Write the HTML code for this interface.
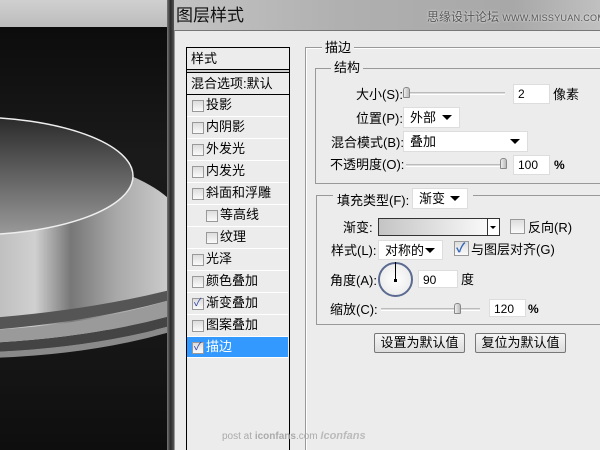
<!DOCTYPE html>
<html style="width:600px;height:450px;overflow:hidden"><head><meta charset="utf-8"><style>
*{margin:0;padding:0;box-sizing:border-box}
body{width:600px;height:450px;overflow:hidden;position:relative;background:#111;font-family:"Liberation Sans","Noto Sans CJK SC",sans-serif;font-size:12px;color:#000}
.a{position:absolute}
.t{position:absolute;white-space:nowrap;line-height:14px}
.cb{position:absolute;width:12px;height:12px;border:1px solid #999;background:linear-gradient(#ddd,#fafafa)}
.ck{position:absolute;left:1px;top:-3px;color:#34a;font-size:11px;line-height:14px}
.item{position:absolute;left:187px;width:101px;height:22px;border-bottom:1px solid #fff}
.item .cb{left:5px;top:5px}
.item .lb{position:absolute;left:19px;top:2px;font-size:13px;line-height:16px}
.inp{position:absolute;background:#fff;border:1px solid #ddd;font-size:12px;padding-left:4px;line-height:18px}
.dd{position:absolute;background:#fff;border:1px solid #ddd;font-size:13px;padding-left:6px;line-height:19px}
.dd:after{content:"";position:absolute;right:7px;top:7px;border-left:5px solid transparent;border-right:5px solid transparent;border-top:5px solid #000}
.sl{position:absolute;height:3px;border-top:1px solid #bbb;border-bottom:1px solid #fff;background:#ddd}
.th{position:absolute;width:7px;height:11px;background:linear-gradient(90deg,#eee,#bbb);border:1px solid #888;border-radius:3px 3px 1px 1px}
.btn{position:absolute;height:20px;border:1px solid #777;border-radius:2px;background:linear-gradient(#f6f6f6,#ddd);font-size:13px;text-align:center;line-height:18px}
</style></head><body>
<div class="a" style="left:0;top:0;width:167px;height:27px;background:linear-gradient(#d0d0d0,#bcbcbc)"></div>
<div class="a" style="left:0;top:27px;width:167px;height:423px;background:linear-gradient(#0c0c0c,#1a1a1a 30%,#151515 80%,#0e0e0e)"></div>
<svg class="a" style="left:0;top:0" width="167" height="450">
<defs>
<linearGradient id="body" x1="0" x2="1"><stop offset="0" stop-color="#bbb"/><stop offset=".25" stop-color="#d0d0d0"/><stop offset=".45" stop-color="#777"/><stop offset=".7" stop-color="#a8a8a8"/><stop offset="1" stop-color="#ccc"/></linearGradient>
<linearGradient id="top" x1="0" y1="0" x2="0" y2="1"><stop offset="0" stop-color="#2a2a2a"/><stop offset="1" stop-color="#9a9a9a"/></linearGradient>
</defs>
<path d="M-10 330 L-10 150 C60 150 140 170 170 200 L170 330 Z" fill="url(#body)"/>
<path d="M-10 318 Q90 310 170 290 L170 300 Q90 322 -10 330 Z" fill="#555"/>
<path d="M-10 330 Q90 325 170 300 L170 316 Q90 338 -10 343 Z" fill="#9a9a9a"/>
<path d="M-10 343 Q90 338 170 316 L170 326 Q90 348 -10 352 Z" fill="#444"/>
<path d="M-10 352 Q90 348 170 326 L170 332 Q90 355 -10 358 Z" fill="#8a8a8a"/>
<ellipse cx="-30" cy="176" rx="163" ry="59" fill="url(#top)" stroke="#eee" stroke-width="1.5"/>
</svg>
<div class="a" style="left:167px;top:0;width:433px;height:31px;background:linear-gradient(90deg,#c4c4c4,#b0b0b0 40%,#a8a8a8 80%,#c0c0c0)"></div>
<div class="t" style="left:176px;top:7px;font-size:17px;line-height:18px;color:#111">图层样式</div>
<div class="t" style="left:427px;top:10px;font-size:12px;color:#555;text-shadow:0 0 2px #fff">思缘设计论坛 <span style="font-size:9px;letter-spacing:.3px">WWW.MISSYUAN.COM</span></div>
<div class="a" style="left:167px;top:0;width:7px;height:450px;background:linear-gradient(90deg,#777,#2a2a2a,#555)"></div>
<div class="a" style="left:174px;top:30px;width:426px;height:420px;background:#ececec;border-top:1px solid #777;border-left:1px solid #999"></div>
<div class="a" style="left:186px;top:47px;width:104px;height:403px;border:1px solid #000;border-bottom:none;background:#ececec"></div>
<div class="t" style="left:191px;top:52px;font-size:13px">样式</div>
<div class="a" style="left:187px;top:69px;width:102px;height:4px;border-top:1px solid #000;border-bottom:1px solid #000;background:#ccc"></div>
<div class="t" style="left:191px;top:77px;font-size:13px">混合选项:默认</div>
<div class="a" style="left:187px;top:94px;width:102px;height:1px;background:#000"></div>
<div class="item" style="top:95px"><div class="cb"></div><span class="lb">投影</span></div>
<div class="item" style="top:117px"><div class="cb"></div><span class="lb">内阴影</span></div>
<div class="item" style="top:139px"><div class="cb"></div><span class="lb">外发光</span></div>
<div class="item" style="top:161px"><div class="cb"></div><span class="lb">内发光</span></div>
<div class="item" style="top:183px"><div class="cb"></div><span class="lb">斜面和浮雕</span></div>
<div class="item" style="top:205px"><div class="cb" style="left:19px"></div><span class="lb" style="left:33px">等高线</span></div>
<div class="item" style="top:227px"><div class="cb" style="left:19px"></div><span class="lb" style="left:33px">纹理</span></div>
<div class="item" style="top:249px"><div class="cb"></div><span class="lb">光泽</span></div>
<div class="item" style="top:271px"><div class="cb"></div><span class="lb">颜色叠加</span></div>
<div class="item" style="top:293px"><div class="cb"><span class="ck">✓</span></div><span class="lb">渐变叠加</span></div>
<div class="item" style="top:315px"><div class="cb"></div><span class="lb">图案叠加</span></div>
<div class="item" style="top:337px;background:#3399ff;height:21px"><div class="cb"><span class="ck">✓</span></div><span class="lb" style="color:#fff">描边</span></div>
<div class="a" style="left:305px;top:47px;width:295px;height:403px;border:1px solid #999;border-right:none;border-bottom:none;box-shadow:inset 1px 1px #fff"></div>
<div class="t" style="left:322px;top:41px;font-size:13px;background:#ececec;padding:0 3px">描边</div>
<div class="a" style="left:315px;top:68px;width:285px;height:116px;border:1px solid #999;border-right:none"></div>
<div class="t" style="left:331px;top:61px;font-size:13px;background:#ececec;padding:0 3px">结构</div>
<div class="a" style="left:316px;top:195px;width:284px;height:130px;border:1px solid #999;border-right:none"></div>
<div class="a" style="left:333px;top:190px;width:140px;height:20px;background:#ececec"></div>
<div class="t" style="left:356px;top:88px;font-size:13px">大小(S):</div>
<div class="sl" style="left:405px;top:92px;width:100px"></div><div class="th" style="left:403px;top:87px"></div>
<div class="inp" style="left:513px;top:84px;width:37px;height:20px">2</div>
<div class="t" style="left:553px;top:88px;font-size:13px">像素</div>
<div class="t" style="left:356px;top:112px;font-size:13px">位置(P):</div>
<div class="dd" style="left:403px;top:107px;width:57px;height:21px">外部</div>
<div class="t" style="left:331px;top:136px;font-size:13px">混合模式(B):</div>
<div class="dd" style="left:403px;top:131px;width:125px;height:21px">叠加</div>
<div class="t" style="left:330px;top:158px;font-size:13px">不透明度(O):</div>
<div class="sl" style="left:406px;top:164px;width:100px"></div><div class="th" style="left:500px;top:158px"></div>
<div class="inp" style="left:513px;top:155px;width:37px;height:20px">100</div>
<div class="t" style="left:554px;top:158px;font-weight:bold">%</div>
<div class="t" style="left:337px;top:194px;font-size:13px">填充类型(F):</div>
<div class="dd" style="left:412px;top:188px;width:56px;height:21px">渐变</div>
<div class="t" style="left:343px;top:221px;font-size:13px">渐变:</div>
<div class="a" style="left:378px;top:218px;width:122px;height:18px;border:1px solid #333;background:linear-gradient(90deg,#c4c4c4,#fff)"></div>
<div class="a" style="left:487px;top:219px;width:12px;height:16px;background:#fff;border-left:1px solid #333"></div>
<div class="a" style="left:490px;top:226px;border-left:3px solid transparent;border-right:3px solid transparent;border-top:3px solid #000"></div>
<div class="cb" style="left:510px;top:219px;width:15px;height:15px"></div>
<div class="t" style="left:528px;top:221px;font-size:13px">反向(R)</div>
<div class="t" style="left:331px;top:244px;font-size:13px">样式(L):</div>
<div class="dd" style="left:378px;top:240px;width:65px;height:20px">对称的</div>
<div class="cb" style="left:454px;top:241px;width:15px;height:15px"><span class="t" style="left:1px;top:-1px;color:#36b;font-size:13px;font-weight:bold">✓</span></div>
<div class="t" style="left:471px;top:243px;font-size:13px">与图层对齐(G)</div>
<div class="t" style="left:330px;top:274px;font-size:13px">角度(A):</div>
<div class="a" style="left:378px;top:262px;width:35px;height:35px;border-radius:50%;border:2px solid #5a6a90;background:radial-gradient(#fff,#e6e6e6)"></div>
<div class="a" style="left:395px;top:262px;width:1px;height:18px;background:#000"></div>
<div class="a" style="left:394px;top:279px;width:3px;height:3px;background:#000"></div>
<div class="inp" style="left:418px;top:270px;width:40px;height:18px">90</div>
<div class="t" style="left:461px;top:273px;font-size:13px">度</div>
<div class="t" style="left:330px;top:303px;font-size:13px">缩放(C):</div>
<div class="sl" style="left:381px;top:308px;width:99px"></div><div class="th" style="left:454px;top:303px"></div>
<div class="inp" style="left:489px;top:299px;width:37px;height:18px">120</div>
<div class="t" style="left:528px;top:302px;font-weight:bold">%</div>
<div class="btn" style="left:374px;top:333px;width:91px">设置为默认值</div>
<div class="btn" style="left:475px;top:333px;width:91px">复位为默认值</div>
<div class="t" style="left:222px;top:429px;font-size:10px;color:#aaa">post at <b>iconfans</b>.com <i style="font-weight:bold;color:#bbb;font-size:11px">Iconfans</i></div>
</body></html>
